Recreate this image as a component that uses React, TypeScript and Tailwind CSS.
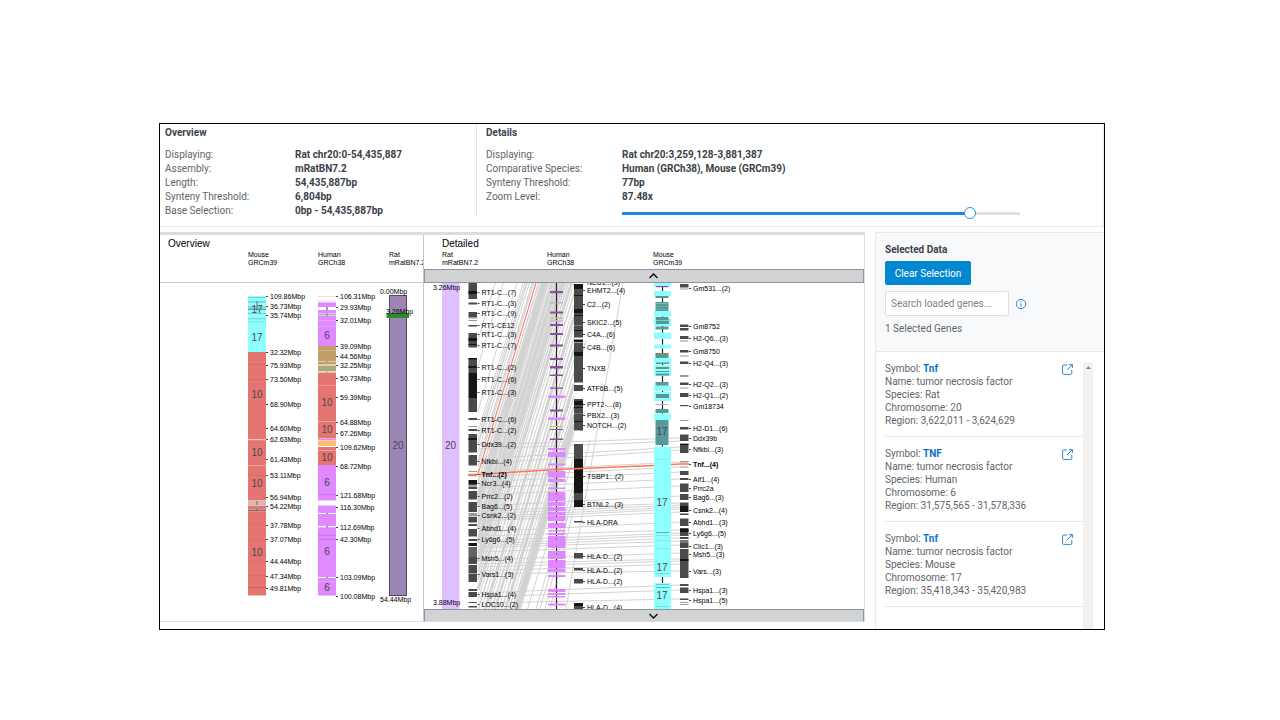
import React from "react";

type Label = [y: number, text: string, bold?: boolean];
type Band = [y1: number, y2: number, fill: string];

const CYAN = "#8effff";
const RED = "#e57570";
const VIOLET = "#e088ff";
const TEAL = "#559999";
const GENE = "#4a4a4a";
const DARK = "#161616";
const GREY = "#9a9a9a";
const PURPLE = "#8a4f9f";

const overviewFacts: [string, string][] = [
  ["Displaying:", "Rat chr20:0-54,435,887"],
  ["Assembly:", "mRatBN7.2"],
  ["Length:", "54,435,887bp"],
  ["Synteny Threshold:", "6,804bp"],
  ["Base Selection:", "0bp - 54,435,887bp"],
];

const detailFacts: [string, string][] = [
  ["Displaying:", "Rat chr20:3,259,128-3,881,387"],
  ["Comparative Species:", "Human (GRCh38), Mouse (GRCm39)"],
  ["Synteny Threshold:", "77bp"],
  ["Zoom Level:", "87.48x"],
];

const genes = [
  { symbol: "Tnf", species: "Rat", chromosome: "20", region: "3,622,011 - 3,624,629" },
  { symbol: "TNF", species: "Human", chromosome: "6", region: "31,575,565 - 31,578,336" },
  { symbol: "Tnf", species: "Mouse", chromosome: "17", region: "35,418,343 - 35,420,983" },
];

/* Overview tracks */
const overviewMouse: Band[] = [
  [296, 352, CYAN], [297, 298, "#79cfcf"], [301.5, 302.5, "#6fb9b9"], [306.5, 307.5, "#6fb9b9"],
  [308.5, 310, "#62a9a9"], [313, 314, "#7cc8c8"], [318.5, 319.2, "#6fb9b9"], [321.5, 322.2, "#7cd8d8"],
  [352, 500.5, RED], [364, 364.6, "#cf6762"], [379, 379.6, "#cf6762"], [439, 440.2, "#f6c5c2"],
  [465.2, 466, "#f2b0ac"], [475.5, 476, "#cf6762"], [500.5, 505, "#dcb6b4"], [505.5, 509, RED],
  [509.5, 510.8, "#6b4a4a"], [511.2, 595.5, RED], [524.5, 525, "#cf6762"], [539, 539.5, "#cf6762"],
  [561, 561.5, "#cf6762"], [575, 575.5, "#cf6762"], [587, 587.8, "#c65f5a"],
];
const overviewHuman: Band[] = [
  [296, 297, "#efdde4"], [300, 302, "#f7e6f5"], [302.5, 307, VIOLET], [310, 313, VIOLET], [313.5, 315.5, "#b8a3bd"],
  [316, 346, VIOLET], [320, 320.7, "#edb0ff"], [326, 326.6, "#edb0ff"], [346, 361, "#c29f68"], [350, 350.6, "#d8be93"],
  [361.5, 364.5, "#c29f68"], [365.5, 371, "#a8ab74"], [371, 371.8, "#d8d2b0"], [372.5, 438.5, RED],
  [385, 385.7, "#eda09c"], [421, 421.8, "#f2b0ac"], [438.8, 440.3, VIOLET], [440.5, 446, "#ffbd72"],
  [447, 465, RED], [450, 451, "#eda09c"], [465, 500.5, VIOLET], [494, 494.6, "#b56fd0"],
  [505.5, 513, VIOLET], [514, 526, VIOLET], [527.3, 577, VIOLET], [534.8, 535.5, "#b56fd0"],
  [538.8, 539.5, "#b56fd0"], [578, 595.5, VIOLET], [581, 581.6, "#edb0ff"],
];
const overviewMouseLabels: Label[] = [
  [296, "109.86Mbp"], [306, "36.73Mbp"], [315, "35.74Mbp"], [352, "32.32Mbp"], [365, "75.93Mbp"], [379, "73.50Mbp"],
  [404, "68.90Mbp"], [428, "64.60Mbp"], [439, "62.63Mbp"], [459, "61.43Mbp"], [475, "53.11Mbp"], [497, "56.94Mbp"],
  [506, "54.22Mbp"], [525, "37.78Mbp"], [539, "37.07Mbp"], [561, "44.44Mbp"], [576, "47.34Mbp"], [588, "49.81Mbp"],
];
const overviewHumanLabels: Label[] = [
  [296, "106.31Mbp"], [307, "29.93Mbp"], [320, "32.01Mbp"], [346, "39.09Mbp"], [356, "44.56Mbp"], [365, "32.25Mbp"],
  [378, "50.73Mbp"], [397, "59.39Mbp"], [422, "64.88Mbp"], [433, "67.26Mbp"], [447, "109.62Mbp"], [466, "68.72Mbp"],
  [495, "121.68Mbp"], [507, "116.30Mbp"], [527, "112.69Mbp"], [539, "42.30Mbp"], [577, "103.09Mbp"], [596, "100.08Mbp"],
];

/* Detailed tracks */
const ratGenes: Band[] = [
  [283, 299, GENE], [291, 294, DARK], [302.5, 304.5, GENE], [312, 317, GENE], [317, 318.5, GREY], [320, 321, GREY],
  [325, 326.5, GENE], [333, 347.5, GENE], [338, 341, DARK], [344, 345, DARK], [358, 373, GENE], [358, 359.5, DARK],
  [366, 368, DARK], [373, 398, DARK], [398, 412, GENE], [418, 420, GENE], [426, 427, GREY], [429, 431, GENE],
  [434, 452.5, GENE], [438, 440, DARK], [455, 465.5, GENE], [471, 472, GREY], [475, 476.2, GREY], [480, 484, DARK],
  [484, 485.5, GENE], [486.5, 489, GENE], [491, 499.5, GENE], [502, 512, GENE], [513, 516.5, GREY], [517, 522.5, GENE],
  [524, 526, GENE], [529, 536.5, GENE], [539, 541, GENE], [543, 546, DARK], [547, 557, "#626262"], [557, 564, GENE],
  [565, 573, GENE], [573.5, 582, GENE], [589, 591, GENE], [592, 597, GENE], [602, 603, GENE], [606, 607.5, GENE],
];
const humanGenes: Band[] = [
  [284, 290, DARK], [289, 309, GENE], [295, 296, DARK], [309, 313, DARK], [313, 337.5, GENE], [315, 316, DARK],
  [325, 326, "#777777"], [330, 331, DARK], [339.5, 342, DARK], [342.5, 382.5, GENE], [352, 356, DARK], [385, 391, GENE],
  [399, 430.5, GENE], [401, 405, DARK], [407, 408, DARK], [413, 414, "#777777"], [421, 422, DARK], [444, 493, GENE], [459, 507, DARK],
  [493, 500, GENE], [521, 522.5, GENE], [553, 558.5, GENE], [568, 570.5, GENE], [579, 583.5, GENE],
  [603, 606, DARK], [606, 609, GENE],
];
const mouseGenes: Band[] = [
  [284, 287.5, GENE], [288.5, 289.5, GREY], [324.5, 327, GENE], [328, 330.5, GENE], [336, 339, GENE],
  [340.5, 341.5, GREY], [350, 352.5, GENE], [355.5, 356.5, GREY], [361.5, 364, GENE], [375, 377, GREY],
  [382.5, 385, GENE], [387.5, 388.5, GREY], [393, 397, GENE], [405, 406.2, GENE], [420, 421, GREY],
  [427, 429.5, GENE], [434.5, 441, GENE], [443.5, 453, GENE], [444, 445, DARK], [461, 462.5, GREY],
  [466.5, 467.5, GREY], [471, 475, GENE], [478, 480, GENE], [483.5, 492, GENE], [494, 500, GENE], [502.5, 506, GENE],
  [506, 512, DARK], [513.5, 515, GENE], [518.5, 526, GENE], [528, 536, GENE], [529, 532, DARK], [537, 539, GENE],
  [540, 543, "#777777"], [543, 548, GENE], [549, 578, GENE], [559, 561, DARK], [584, 586, GENE],
  [587.5, 593, GENE], [598.5, 600, GENE], [602, 603, GREY], [604, 605, GREY],
];
const ratLabels: Label[] = [
  [292, "RT1-C...(7)"], [303, "RT1-C...(3)"], [313, "RT1-C...(9)"], [325, "RT1-CE12"], [334, "RT1-C...(3)"],
  [345, "RT1-C...(7)"], [367, "RT1-C...(2)"], [379, "RT1-C...(6)"], [392, "RT1-C...(3)"], [419, "RT1-C...(6)"],
  [430, "RT1-C...(2)"], [444, "Ddx39...(2)"], [461, "Nfkbi...(4)"], [474, "Tnf...(2)", true], [483, "Ncr3...(4)"],
  [496, "Prrc2...(2)"], [506, "Bag6...(5)"], [515, "Csnk2...(2)"], [528, "Abhd1...(4)"], [539, "Ly6g6...(5)"],
  [558, "Msh5...(4)"], [574, "Vars1...(3)"], [594, "Hspa1...(4)"], [604, "LOC10...(2)"],
];
const humanLabels: Label[] = [
  [282, "NEU1...(3)"], [290, "EHMT2...(4)"], [304, "C2...(2)"], [322, "SKIC2...(5)"], [334, "C4A...(6)"], [347, "C4B...(6)"],
  [368, "TNXB"], [388, "ATF6B...(5)"], [404, "PPT2-...(8)"], [415, "PBX2...(3)"], [425, "NOTCH...(2)"],
  [476, "TSBP1...(2)"], [504, "BTNL2...(3)"], [522, "HLA-DRA"], [556, "HLA-D...(2)"], [570, "HLA-D...(2)"],
  [581, "HLA-D...(2)"], [607, "HLA-D...(4)"],
];
const mouseLabels: Label[] = [
  [288, "Gm531...(2)"], [326, "Gm8752"], [338, "H2-Q6...(3)"], [351, "Gm8750"], [363, "H2-Q4...(3)"],
  [384, "H2-Q2...(3)"], [395, "H2-Q1...(2)"], [406, "Gm18734"], [428, "H2-D1...(6)"], [438, "Ddx39b"],
  [449, "Nfkbi...(3)"], [464, "Tnf...(4)", true], [479, "Aif1...(4)"], [488, "Prrc2a"], [497, "Bag6...(3)"],
  [510, "Csnk2...(4)"], [522, "Abhd1...(3)"], [533, "Ly6g6...(5)"], [546, "Clic1...(3)"], [554, "Msh5...(3)"],
  [571, "Vars...(3)"], [590, "Hspa1...(3)"], [600, "Hspa1...(5)"],
];
const humanNarrow: Band[] = [
  [291, 293.2, PURPLE], [302.3, 303.3, "#bd9bca"], [311.5, 313.5, PURPLE], [317.5, 318.8, "#c5c590"],
  [320, 321.5, "#d0b9d8"], [324, 326, PURPLE], [333, 335, PURPLE], [344.5, 346.5, PURPLE], [358, 360, PURPLE],
  [366, 368.5, PURPLE], [374.5, 376, PURPLE], [387.5, 388.8, PURPLE], [409.5, 411.5, PURPLE],
  [426, 427.2, "#c5c590"], [429, 430, PURPLE], [438.5, 440, PURPLE],
];
const humanBlocks: Band[] = [
  [395.5, 398], [417.5, 420], [448, 450], [452, 457], [463.5, 465.5], [471, 477.5], [479, 482], [487.5, 489],
  [492, 501], [502, 506], [507, 511], [511.7, 515], [515.5, 521], [523, 528], [530, 531.5], [533, 535],
  [536, 548], [551, 559], [560, 568], [568.5, 572], [575, 577], [589, 592], [593, 595], [596, 597.5], [603.5, 605.5],
].map(([a, b]) => [a, b, VIOLET] as Band);
const mouseNarrow: Band[] = [
  [286, 287.2, PURPLE], [296, 298, TEAL], [302, 311, TEAL], [303, 304, "#82b8b8"], [306, 306.6, "#82b8b8"],
  [309, 309.6, "#82b8b8"], [317, 319, TEAL], [326.5, 329.5, TEAL], [353, 358, TEAL], [353, 354.2, "#898a55"],
  [382, 386, TEAL], [404, 405, "#c7a6d0"], [409, 413, TEAL], [420, 445, TEAL],
];
const mouseBlocks: Band[] = [
  [283, 286], [291, 296], [311, 316.5], [319, 326], [332.5, 339], [344.5, 348.5], [358, 364], [365, 376],
  [385.5, 391], [392, 401], [413.5, 420], [446.5, 577], [583, 609],
].map(([a, b]) => [a, b, CYAN] as Band);
const mouseDetail: Band[] = [
  [319, 324, TEAL], [320.5, 321, CYAN], [362.5, 364, TEAL], [367, 369, TEAL], [371, 372, TEAL], [373.5, 375.5, TEAL],
  [394, 398, TEAL], [459, 459.6, "#79e2e2"], [532, 533, "#5cb3b3"], [535, 535.6, "#79d8d8"], [540, 540.6, "#79d8d8"],
  [548, 548.6, "#79d8d8"], [573, 573.8, "#79d0d0"], [584, 585, "#6cc4c4"], [587, 588, "#5cb3b3"], [606, 606.8, "#79d8d8"],
];

/* Rat rows whose human counterpart lies far up the chromosome: [row, stroke width] */
const steepLinks: [number, number][] = [
  [340, 1], [366, 1], [411, 1], [432, 1], [438, 1], [444, 1.5], [452, 1], [462, 1.5], [467, 1], [483, 1.5],
  [490, 1], [496, 3], [505, 4], [514, 1.5], [520, 1], [528, 3], [537, 1.5], [543, 4], [553, 1.5], [562, 4],
  [572, 1.5], [580, 1.5], [590, 3], [600, 1], [610, 1.5], [621, 1], [633, 3], [643, 1], [654, 1.5],
  [665, 2.5], [676, 1], [688, 1.5], [700, 3], [712, 1], [722, 1.5], [731, 3], [740, 4], [749, 1], [772, 1], [800, 1], [812, 1],
];
/* Rat row to mouse row */
const flatLinks: [number, number][] = [
  [445, 438], [449, 441], [459, 447], [464, 450], [472, 462], [477, 467], [482, 472], [488, 479], [495, 486], [506, 496],
  [511, 503], [514, 505], [517, 507], [519, 509], [521, 512], [532, 522], [536, 530], [541, 533], [544, 535], [546, 538],
  [548, 541], [552, 545], [560, 553], [564, 559], [567, 561], [571, 564], [574, 571], [593, 585], [597, 590], [603, 599],
];
const humanMouseLinks: [number, number, number, number][] = [
  [623, 283, 566, 609], [567, 412, 586, 340], [545, 609, 575, 487], [550, 609, 590, 440],
];

function Bands({ x, width, data }: { x: number; width: number; data: Band[] }) {
  return (
    <g>
      {data.map(([a, b, fill], i) => (
        <rect key={i} x={x} y={a} width={width} height={b - a} fill={fill} />
      ))}
    </g>
  );
}

function Labels({ x, data }: { x: number; data: Label[] }) {
  return (
    <g fontSize="7" fill="#000">
      {data.map(([y, text, bold], i) => (
        <g key={i}>
          <rect x={x - 4} y={y} width="2" height="1" fill="#444" />
          <text x={x} y={y + 3} fontWeight={bold ? 700 : 400}>{text}</text>
        </g>
      ))}
    </g>
  );
}

function Chromosomes({ x, data }: { x: number; data: [number, string][] }) {
  return (
    <g fontSize="10" fill="#4d4650" textAnchor="middle">
      {data.map(([y, text], i) => (
        <text key={i} x={x} y={y + 4}>{text}</text>
      ))}
    </g>
  );
}

function OverviewChart() {
  return (
    <svg className="block h-[338px] w-[263px]" viewBox="160 283 263 338" role="img" aria-label="Genome overview">
      <Bands x={248} width={18} data={overviewMouse} />
      <path d="M257 501v4M257 509v2M257 301v10" stroke="#555" strokeWidth="0.8" />
      <path d="M327 307v9M327 361v1M327 371v1.5M327 512v3M327 525v3M327 577v1" stroke="#333" strokeWidth="1" />
      <Bands x={318} width={18} data={overviewHuman} />
      <rect x="389.5" y="295.5" width="17" height="300" fill="#9d86b5" stroke="#564a63" />
      <rect x="386.500" y="313" width="22.5" height="5" fill="#2a8a2f" />
      <Chromosomes x={257} data={[[309, "17"], [337, "17"], [394, "10"], [452, "10"], [483, "10"], [552, "10"]]} />
      <Chromosomes x={327} data={[[335, "6"], [402, "10"], [429, "10"], [457, "10"], [482, "6"], [551, "6"], [587, "6"]]} />
      <Chromosomes x={398} data={[[445, "20"]]} />
      <Labels x={270} data={overviewMouseLabels} />
      <Labels x={340} data={overviewHumanLabels} />
      <g fontSize="7" fill="#000">
        <text x="380" y="294">0.00Mbp</text>
        <text x="386" y="314">3.26Mbp</text>
        <text x="380" y="602">54.44Mbp</text>
      </g>
    </svg>
  );
}

function DetailChart() {
  return (
    <svg className="block h-[326px] w-[440px]" viewBox="424 283 440 326" role="img" aria-label="Detailed comparison">
      <g stroke="#d3d3d3" fill="none">
        {steepLinks.map(([y, w], i) => (
          <line key={i} x1="478" y1={y} x2="574" y2={y - 316} strokeWidth={w} />
        ))}
        {flatLinks.map(([a, b], i) => (
          <line key={i} x1="478" y1={a} x2="680" y2={b} strokeWidth="1" />
        ))}
        {humanMouseLinks.map(([x1, y1, x2, y2], i) => (
          <line key={i} x1={x1} y1={y1} x2={x2} y2={y2} strokeWidth="1" />
        ))}
      </g>
      <path d="M536 283L478 474" stroke="#f08a70" strokeWidth="1.2" fill="none" />

      <rect x="442" y="283" width="17.500" height="326" fill="#dfc0ff" />
      <Chromosomes x={450.5} data={[[445, "20"]]} />
      <g fontSize="7" fill="#000">
        <text x="433" y="290">3.26Mbp</text>
        <text x="433" y="605">3.88Mbp</text>
      </g>
      <Bands x={468.5} width={8.5} data={ratGenes} />

      <path d="M556.5 283V609" stroke="#222" strokeWidth="1.2" />
      <Bands x={550} width={13} data={humanNarrow} />
      <Bands x={548} width={17.5} data={humanBlocks} />
      <path d="M556.5 448V605" stroke="#6d3f80" strokeWidth="0.8" strokeDasharray="1.500 6" />
      <Bands x={574} width={9} data={humanGenes} />

      <path d="M662.5 283V609" stroke="#222" strokeWidth="1.2" />
      <Bands x={655.5} width={13} data={mouseNarrow} />
      <Bands x={654} width={17} data={mouseBlocks} />
      <Bands x={656} width={13} data={mouseDetail} />
      <Chromosomes x={662} data={[[431, "17"], [502, "17"], [567, "17"], [595, "17"]]} />
      <Bands x={680} width={8.500} data={mouseGenes} />

      <path d="M468 474.500H478L556 469.500L654 465.500M671 464.500L680 464H689" stroke="#ff7655" strokeWidth="1.5" fill="none" />
      <Labels x={481.5} data={ratLabels} />
      <Labels x={587} data={humanLabels} />
      <Labels x={693} data={mouseLabels} />
    </svg>
  );
}

function Facts({ rows, labelClass }: { rows: [string, string][]; labelClass: string }) {
  return (
    <dl className="mt-2 text-[10px] leading-[14px]">
      {rows.map(([label, value]) => (
        <div key={label} className="flex">
          <dt className={labelClass}>{label}</dt>
          <dd className="font-bold text-[#3b4148]">{value}</dd>
        </div>
      ))}
    </dl>
  );
}

function ScrollButton({ direction }: { direction: "up" | "down" }) {
  return (
    <button
      type="button"
      aria-label={direction === "up" ? "Scroll up" : "Scroll down"}
      className="flex h-3.5 w-full items-center border border-[#8797aa] bg-[#d3d3d3] pl-[224px]"
    >
      <svg width="9" height="6" viewBox="0 0 9 6" fill="none" stroke="#111" strokeWidth="1.5">
        <path d={direction === "up" ? "M0.5 5L4.500 1L8.500 5" : "M0.5 1L4.500 5L8.500 1"} />
      </svg>
    </button>
  );
}

function TrackName({ species, assembly, className }: { species: string; assembly: string; className: string }) {
  return (
    <div className={`shrink-0 whitespace-nowrap text-[7px] leading-[8px] text-black ${className}`}>
      <div>{species}</div>
      <div>{assembly}</div>
    </div>
  );
}

export default function App() {
  const [query, setQuery] = React.useState("");
  const [zoom, setZoom] = React.useState(88.6);
  return (
    <div className="min-h-screen bg-white pt-[123px] pr-[175px] pl-[159px] font-['Roboto','Noto_Sans',sans-serif] text-[10px] text-[#5f656c]">
      <main className="h-[507px] overflow-hidden border border-black">
        <header className="flex h-[103px] border-r border-b border-[#e9eaec]">
          <section className="h-[92px] w-[317px] shrink-0 border-r border-[#e4e5e7] pt-0.5 pl-[5px]">
            <h2 className="text-[10px] leading-[14px] font-bold text-[#3b4148]">Overview</h2>
            <Facts rows={overviewFacts} labelClass="w-[130px]" />
          </section>
          <section className="min-w-0 flex-1 pt-0.5 pl-[9px]">
            <h2 className="text-[10px] leading-[14px] font-bold text-[#3b4148]">Details</h2>
            <Facts rows={detailFacts} labelClass="w-[136px]" />
            <input
              type="range"
              aria-label="Zoom level"
              min={0}
              max={100}
              step={0.1}
              value={zoom}
              onChange={(e) => setZoom(Number(e.target.value))}
              className="mt-[3px] ml-[136px] block h-3 w-[398px] appearance-none bg-transparent bg-[linear-gradient(to_right,#1e88e5_87%,#dee2e6_87%)] bg-[length:100%_3px] bg-center bg-no-repeat [&::-webkit-slider-thumb]:size-3 [&::-webkit-slider-thumb]:appearance-none [&::-webkit-slider-thumb]:rounded-full [&::-webkit-slider-thumb]:border [&::-webkit-slider-thumb]:border-solid [&::-webkit-slider-thumb]:border-[#2196f3] [&::-webkit-slider-thumb]:bg-white"
            />
          </section>
        </header>

        <div className="flex pt-[5px]">
          <div className="flex h-[390px] min-w-0 flex-1 border-t-[3px] border-r border-b border-[#dadddf] font-['Liberation_Sans',Arial,sans-serif]">
            <section className="w-[264px] shrink-0 overflow-hidden border-r border-[#c4c8cc]">
              <div className="h-12 border-b border-[#c8c8c8] pl-2">
                <h3 className="pt-0.5 text-[10px] leading-[14px] text-black">Overview</h3>
                <div className="flex pl-[80px]">
                  <TrackName species="Mouse" assembly="GRCm39" className="w-[70px]" />
                  <TrackName species="Human" assembly="GRCh38" className="w-[71px]" />
                  <TrackName species="Rat" assembly="mRatBN7.2" className="" />
                </div>
              </div>
              <OverviewChart />
            </section>
            <section className="min-w-0 flex-1 overflow-hidden">
              <div className="h-[34px] pl-[18px]">
                <h3 className="pt-0.5 text-[10px] leading-[14px] text-black">Detailed</h3>
                <div className="flex">
                  <TrackName species="Rat" assembly="mRatBN7.2" className="w-[105px]" />
                  <TrackName species="Human" assembly="GRCh38" className="w-[106px]" />
                  <TrackName species="Mouse" assembly="GRCm39" className="" />
                </div>
              </div>
              <ScrollButton direction="up" />
              <DetailChart />
              <ScrollButton direction="down" />
            </section>
          </div>

          <aside className="ml-2.5 h-[400px] w-[229px] shrink-0 border-t border-l border-[#e6e8eb]">
            <div className="h-[119px] border-b border-[#e6e8eb] bg-[#f8f9fb] pt-2.5 pl-[9px]">
              <h2 className="text-[10px] leading-[14px] font-bold text-[#3b4148]">Selected Data</h2>
              <button type="button" className="mt-1 block h-6 w-[86px] rounded-xs bg-[#0288d1] pt-px text-[10px] leading-[14px] text-white">
                Clear Selection
              </button>
              <div className="mt-1.5 flex items-center gap-1.5">
                <input
                  type="text"
                  aria-label="Search loaded genes"
                  placeholder="Search loaded genes..."
                  value={query}
                  onChange={(e) => setQuery(e.target.value)}
                  className="h-[25px] w-[124px] rounded-xs border border-[#dcdfe3] bg-white px-[5px] text-[10px] text-[#5f656c] placeholder:text-[#7d838a]"
                />
                <svg width="12" height="12" viewBox="0 0 12 12" fill="none" stroke="#2f86d6" strokeWidth="1">
                  <circle cx="6" cy="6" r="4.700" />
                  <path d="M6 5.400V8.600M6 3.300V4.300" />
                </svg>
              </div>
              <p className="mt-1.5 leading-[14px]">1 Selected Genes</p>
            </div>
            <div className="flex h-[280px] pt-2.5 pl-[9px]">
              <ul className="w-[198px]">
                {genes.map((g) => (
                  <li key={g.species} className="mb-2.5 flex h-[75px] justify-between border-b border-[#e4e6e9] pr-2.5 leading-[13px]">
                    <div>
                      <div>
                        Symbol: <a href="#gene" className="font-bold text-[#0b6fd0]">{g.symbol}</a>
                      </div>
                      <div>Name: tumor necrosis factor</div>
                      <div>Species: {g.species}</div>
                      <div>Chromosome: {g.chromosome}</div>
                      <div>Region: {g.region}</div>
                    </div>
                    <a href="#details" aria-label={`Open ${g.species} gene`} className="mt-0.5 block h-3">
                      <svg width="11" height="11" viewBox="0 0 11 11" fill="none" stroke="#2f86d6" strokeWidth="1">
                        <path d="M5 1H1.500Q0.600 1 0.600 2V9.400Q0.600 10.400 1.600 10.400H8.800Q9.800 10.400 9.800 9.400V6" />
                        <path d="M7 0.600H10.400V4M10.300 0.700L5.200 5.800" />
                      </svg>
                    </a>
                  </li>
                ))}
              </ul>
              <div className="flex w-2.5 justify-center bg-[#f1f1f1] pt-1">
                <svg width="5" height="3" viewBox="0 0 5 3" fill="#8a8a8a">
                  <path d="M2.500 0L5 3H0Z" />
                </svg>
              </div>
            </div>
          </aside>
        </div>
      </main>
    </div>
  );
}
